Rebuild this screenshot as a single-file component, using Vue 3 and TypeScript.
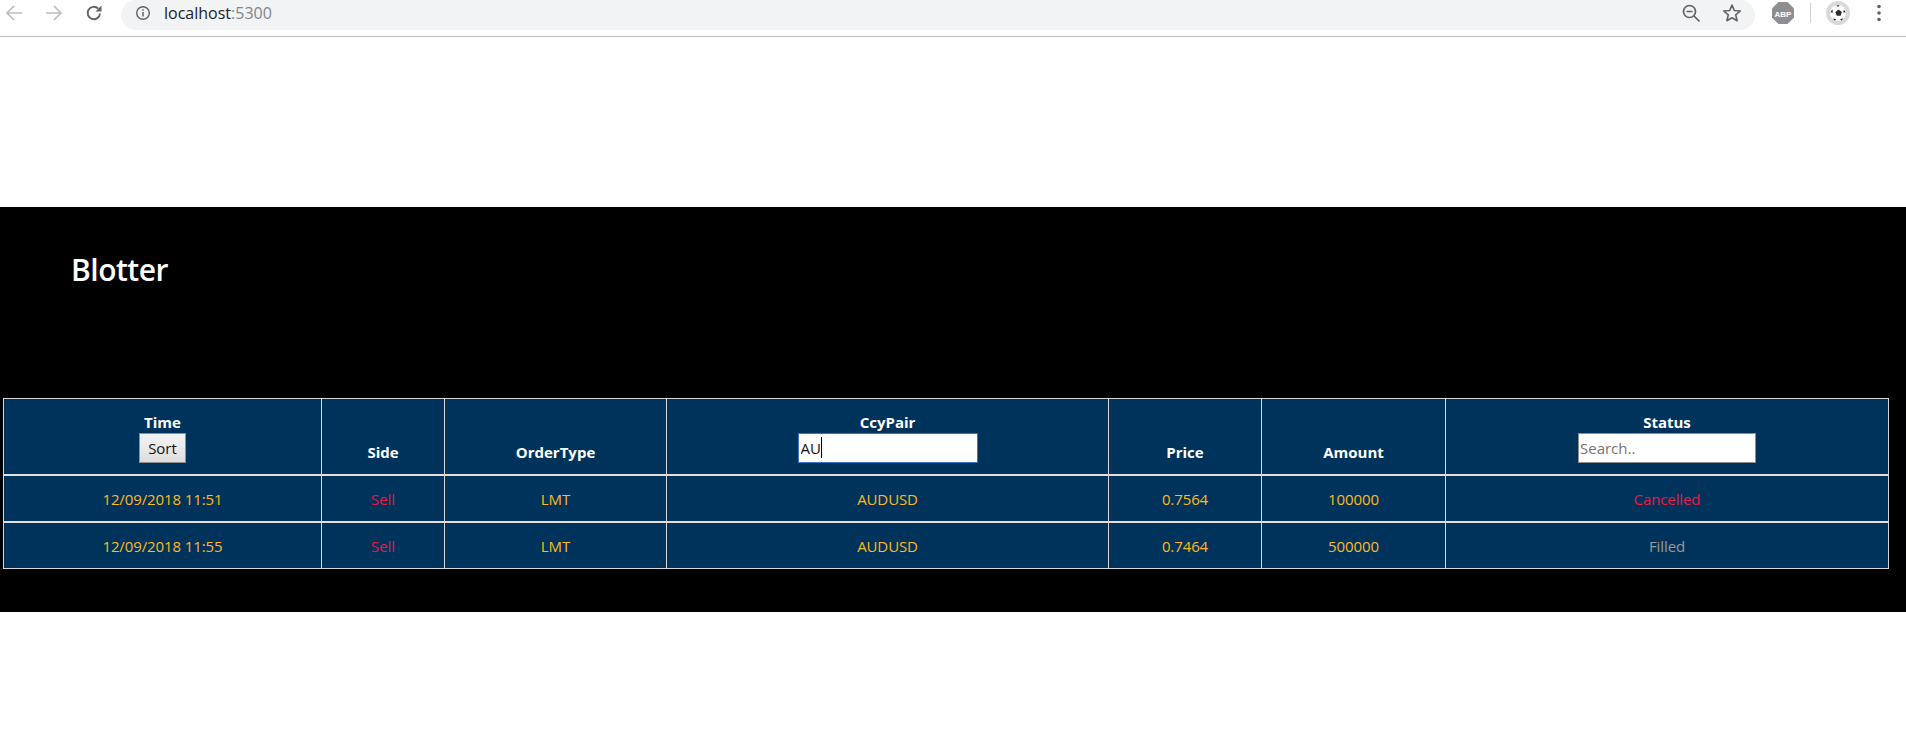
<script setup lang="ts">
interface Order {
  time: string
  side: string
  type: string
  pair: string
  price: string
  amount: string
  status: string
}
const orders: Order[] = [
  { time: '12/09/2018 11:51', side: 'Sell', type: 'LMT', pair: 'AUDUSD', price: '0.7564', amount: '100000', status: 'Cancelled' },
  { time: '12/09/2018 11:55', side: 'Sell', type: 'LMT', pair: 'AUDUSD', price: '0.7464', amount: '500000', status: 'Filled' },
]
</script>

<template>
  <div class="page">
    <header class="chrome">
      <div class="nav">
        <svg class="navicon" viewBox="0 0 18 18" width="18" height="18"><path d="M17 9H2M9 2 2 9l7 7" fill="none" stroke="#bdbdbd" stroke-width="1.7" /></svg>
        <svg class="navicon" viewBox="0 0 18 18" width="18" height="18"><path d="M1 9h15M9 2l7 7-7 7" fill="none" stroke="#bdbdbd" stroke-width="1.7" /></svg>
        <svg class="navicon" viewBox="0 0 18 18" width="18" height="18"><path d="M15 9.500A6.200 6.200 0 1 1 13.200 4.600" fill="none" stroke="#5f6368" stroke-width="1.900" /><path d="M16.500 1.500v6h-6z" fill="#5f6368" /></svg>
      </div>
      <div class="omnibox">
        <svg class="info" viewBox="0 0 16 16" width="16" height="16"><circle cx="8" cy="8" r="6.300" fill="none" stroke="#5f6368" stroke-width="1.400" /><path d="M8 7v4.500M8 4.300v1.500" stroke="#5f6368" stroke-width="1.500" /></svg>
        <span class="url">localhost<span class="port">:5300</span></span>
        <span class="grow"></span>
        <svg viewBox="0 0 20 20" width="20" height="20"><circle cx="8.500" cy="8.500" r="6" fill="none" stroke="#5f6368" stroke-width="1.700" /><path d="M5.500 8.500h6M13 13l5.500 5.500" stroke="#5f6368" stroke-width="1.700" /></svg>
        <svg class="star" viewBox="0 0 20 20" width="20" height="20"><path d="m10 2 2.300 5.500 6 .5-4.600 3.900 1.400 5.800L10 14.700l-5.100 3 1.400-5.800L1.700 8l6-.5z" fill="none" stroke="#5f6368" stroke-width="1.600" stroke-linejoin="round" /></svg>
      </div>
      <div class="extensions">
        <svg class="abp" viewBox="0 0 22 22" width="22" height="22"><path d="M6.500 0h9L22 6.500v9L15.500 22h-9L0 15.500v-9z" fill="#8e8e8e" /><text x="11" y="14.500" text-anchor="middle" class="abptext">ABP</text></svg>
        <span class="sep"></span>
        <span class="avatar">
          <svg viewBox="0 0 18 18" width="18" height="18"><circle cx="9" cy="9" r="8" fill="#fff" /><path d="m9.500 5.500 3.400 2.400-1.300 3.800H7.700L6.400 7.900zM7.500 1.200h3L9 3zM1.500 8.500l1.700-3.300.8 3.300zM15 5.500l1.700 3-2.500-.3zM4 14.500l3.300.7-1.600 1.600zM14.300 14.300l-3.200 1 1.500 1.500z" fill="#2b2b2b" /></svg>
        </span>
        <svg class="dots" viewBox="0 0 6 18" width="6" height="18"><circle cx="3" cy="2.500" r="1.800" fill="#5f6368" /><circle cx="3" cy="9" r="1.800" fill="#5f6368" /><circle cx="3" cy="15.500" r="1.800" fill="#5f6368" /></svg>
      </div>
    </header>

    <section class="blotter">
      <h2 class="title">Blotter</h2>
      <table class="grid">
        <colgroup>
          <col class="c1" /><col class="c2" /><col class="c3" /><col class="c4" /><col class="c5" /><col class="c6" /><col class="c7" />
        </colgroup>
        <thead>
          <tr>
            <th>
              <div>Time</div>
              <button class="sort" type="button">Sort</button>
            </th>
            <th>Side</th>
            <th>OrderType</th>
            <th>
              <div>CcyPair</div>
              <span class="field wide">
                <input class="search focused" type="text" value="AU" />
                <span class="caret"></span>
              </span>
            </th>
            <th>Price</th>
            <th>Amount</th>
            <th>
              <div>Status</div>
              <span class="field">
                <input class="search" type="text" placeholder="Search.." />
              </span>
            </th>
          </tr>
        </thead>
        <tbody>
          <tr v-for="o in orders" :key="o.time">
            <td>{{ o.time }}</td>
            <td class="red">{{ o.side }}</td>
            <td>{{ o.type }}</td>
            <td>{{ o.pair }}</td>
            <td>{{ o.price }}</td>
            <td>{{ o.amount }}</td>
            <td :class="o.status === 'Cancelled' ? 'red' : 'grey'">{{ o.status }}</td>
          </tr>
        </tbody>
      </table>
    </section>
  </div>
</template>

<style>
html, body { background: #fff; }
</style>

<style scoped>
.page {
  min-height: 741px;
  background: #fff;
  font-family: "Open Sans", "Noto Sans", sans-serif;
}
.chrome {
  display: flex;
  align-items: flex-start;
  height: 36px;
  border-bottom: 1px solid #c4bcc4;
  box-sizing: content-box;
}
.nav {
  display: flex;
  gap: 22px;
  padding: 4px 0 0 5px;
  width: 121px;
  box-sizing: border-box;
  flex: none;
}
.omnibox {
  display: flex;
  align-items: center;
  width: 1634px;
  height: 30px;
  box-sizing: border-box;
  padding: 0 13px 4px 14px;
  background: #f1f3f4;
  border-radius: 15px;
  flex: none;
}
.info { margin-right: 13px; }
.url { font-size: 16px; color: #202124; }
.port { color: #80868b; }
.grow { flex: 1; }
.star { margin-left: 21px; }
.extensions {
  display: flex;
  align-items: center;
  height: 26px;
  padding-left: 17px;
}
.abptext { font: 700 8px "Liberation Sans", sans-serif; fill: #fff; }
.sep { width: 1px; height: 20px; background: #d0d0d0; margin: 0 15px 0 16px; }
.avatar {
  width: 24px;
  height: 24px;
  border-radius: 50%;
  background: #d9d9d9;
  display: flex;
  align-items: center;
  justify-content: center;
}
.dots { margin-left: 26px; }

.blotter {
  margin-top: 170px;
  height: 405px;
  box-sizing: border-box;
  padding: 0 17px 0 3px;
  background: #000;
  color: #fff;
  overflow: hidden;
}
.title {
  margin: 43px 0 0 68px;
  height: 148px;
  font-size: 30px;
  line-height: 40px;
  font-weight: 600;
  letter-spacing: -0.5px;
}
.grid {
  width: 1886px;
  table-layout: fixed;
  border-collapse: separate;
  border-spacing: 0;
  background: #00335c;
  border: 1px solid #d8d8d8;
  font-size: 15px;
  text-align: center;
}
.c1 { width: 317px; }
.c2 { width: 123px; }
.c3 { width: 222px; }
.c4 { width: 442px; }
.c5 { width: 153px; }
.c6 { width: 184px; }
th {
  height: 77px;
  box-sizing: border-box;
  padding: 0 1px 12px;
  vertical-align: bottom;
  font-weight: 700;
  line-height: 20px;
  color: #fff;
  border-left: 1px solid #d8d8d8;
  border-bottom: 2px solid #e0e0e0;
}
td {
  height: 45px;
  padding: 0;
  color: #ffb91c;
  border-left: 1px solid #d8d8d8;
  letter-spacing: -0.1px;
}
tbody tr:first-child td { border-bottom: 2px solid #e0e0e0; }
th:first-child, td:first-child { border-left: 0; }
.red { color: #ee1540; }
.grey { color: #9a9a9a; }
.sort {
  display: block;
  margin: 1px auto -1px;
  width: 47px;
  height: 30px;
  padding: 0;
  font: 400 15px "Open Sans", sans-serif;
  color: #111;
  background: linear-gradient(#f4f4f4, #dedede);
  border: 1px solid #8f8f8f;
}
.field {
  position: relative;
  display: block;
  width: 178px;
  margin: 1px auto -1px;
}
.wide { width: 180px; }
.search {
  display: block;
  width: 100%;
  height: 30px;
  box-sizing: border-box;
  padding: 0 1px;
  font: 400 15px "Open Sans", sans-serif;
  color: #111;
  background: #fff;
  border: 1px solid #8f8f8f;
  border-radius: 0;
  outline: none;
}
.search::placeholder { color: #757575; }
.focused {
  border: 1px solid #3b77c4;
  border-radius: 1px;
  padding: 0 2px;
}
.caret {
  position: absolute;
  left: 23px;
  top: 4px;
  width: 1px;
  height: 21px;
  background: #000;
}
</style>
